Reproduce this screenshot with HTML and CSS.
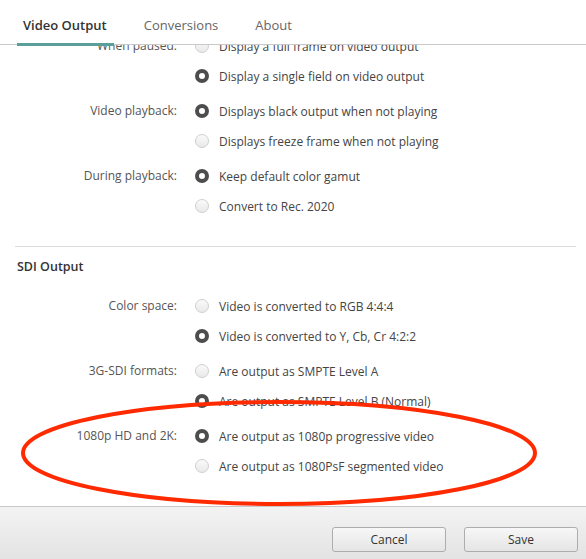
FILE: index.html
```html
<!DOCTYPE html>
<html>
<head>
<meta charset="utf-8">
<link rel="stylesheet" href="styles.css">
</head>
<body>
<div class="window">
  <header class="tabs">
    <div class="tab active">Video Output</div>
    <div class="tab">Conversions</div>
    <div class="tab">About</div>
  </header>
  <main class="content">
    <div class="scroll">
      <section class="group">
        <div class="label">When paused:</div>
        <div class="options">
          <div class="opt"><span class="radio"></span>Display a full frame on video output</div>
          <div class="opt"><span class="radio on"></span>Display a single field on video output</div>
        </div>
      </section>
      <section class="group">
        <div class="label">Video playback:</div>
        <div class="options">
          <div class="opt"><span class="radio on"></span>Displays black output when not playing</div>
          <div class="opt"><span class="radio"></span>Displays freeze frame when not playing</div>
        </div>
      </section>
      <section class="group">
        <div class="label">During playback:</div>
        <div class="options">
          <div class="opt"><span class="radio on"></span>Keep default color gamut</div>
          <div class="opt"><span class="radio"></span>Convert to Rec. 2020</div>
        </div>
      </section>
      <hr class="divider">
      <h2 class="section-title">SDI Output</h2>
      <section class="group">
        <div class="label">Color space:</div>
        <div class="options">
          <div class="opt"><span class="radio"></span>Video is converted to RGB 4:4:4</div>
          <div class="opt"><span class="radio on"></span>Video is converted to Y, Cb, Cr 4:2:2</div>
        </div>
      </section>
      <section class="group">
        <div class="label">3G-SDI formats:</div>
        <div class="options">
          <div class="opt"><span class="radio"></span>Are output as SMPTE Level A</div>
          <div class="opt"><span class="radio on"></span>Are output as SMPTE Level B (Normal)</div>
        </div>
      </section>
      <section class="group">
        <div class="label">1080p HD and 2K:</div>
        <div class="options">
          <div class="opt"><span class="radio on"></span>Are output as 1080p progressive video</div>
          <div class="opt"><span class="radio"></span>Are output as 1080PsF segmented video</div>
        </div>
      </section>
    </div>
  </main>
  <footer class="footer">
    <button class="btn">Cancel</button>
    <button class="btn">Save</button>
  </footer>
  <svg class="annotation" width="586" height="559" viewBox="0 0 586 559">
    <ellipse cx="279" cy="453" rx="256" ry="51" fill="none" stroke="#ff2a00" stroke-width="4"/>
  </svg>
</div>
</body>
</html>
```

FILE: styles.css
```css
* { box-sizing: border-box; }
html, body { margin: 0; padding: 0; background: #fff; }
body {
  font-family: "Open Sans", "Liberation Sans", sans-serif;
  font-size: 12px;
  color: #444;
}
.window {
  position: relative;
  width: 586px;
  height: 559px;
  display: flex;
  flex-direction: column;
  overflow: hidden;
}
.tabs {
  height: 45px;
  flex: none;
  display: flex;
  gap: 24px;
  padding-left: 17px;
  border-bottom: 1px solid #c9c9c9;
  background: #fff;
  position: relative;
  z-index: 2;
}
.tab {
  height: 46px;
  margin-bottom: -1px;
  padding: 16px 7px 0 6px;
  line-height: 18px;
  font-size: 13px;
  color: #666;
  border-bottom: 3px solid transparent;
}
.tab.active {
  color: #333;
  font-weight: 600;
  border-bottom-color: #5b9f9b;
}
.content {
  flex: 1;
  overflow: hidden;
  position: relative;
}
.scroll {
  margin-top: -14px;
}
.group {
  display: grid;
  grid-template-columns: 177px 1fr;
  margin-bottom: 5px;
}
.label {
  text-align: right;
  color: #555;
  line-height: 30px;
  height: 30px;
}
.options { display: flex; flex-direction: column; }
.opt {
  height: 30px;
  display: flex;
  align-items: center;
  padding-left: 18px;
  color: #444;
}
.radio {
  width: 14px;
  height: 14px;
  border-radius: 50%;
  border: 1px solid #cfcfcf;
  background: linear-gradient(#fafafa, #e9e9e9);
  margin-right: 10px;
  flex: none;
}
.radio.on {
  border: 4px solid #4d4d4d;
  background: #fff;
}
.divider {
  border: 0;
  border-top: 1px solid #dcdcdc;
  margin: 25px 10px 0 15px;
}
.section-title {
  margin: 10px 0 14px;
  padding-left: 17px;
  font-size: 12.5px;
  font-weight: 600;
  color: #333;
  line-height: 20px;
}
.footer {
  height: 53px;
  flex: none;
  border-top: 1px solid #c8c8c8;
  background: linear-gradient(#f3f3f3, #e3e3e3);
  display: flex;
  justify-content: flex-end;
  align-items: flex-start;
  gap: 18px;
  padding: 20px 8px 0 0;
}
.btn {
  width: 114px;
  height: 25px;
  border: 1px solid #adadad;
  border-radius: 3px;
  background: linear-gradient(#f7f7f7, #e5e5e5);
  font-family: "Open Sans", "Liberation Sans", sans-serif;
  font-size: 12px;
  color: #333;
  padding: 0;
}
.annotation {
  position: absolute;
  left: 0;
  top: 0;
  pointer-events: none;
  z-index: 3;
}
```
